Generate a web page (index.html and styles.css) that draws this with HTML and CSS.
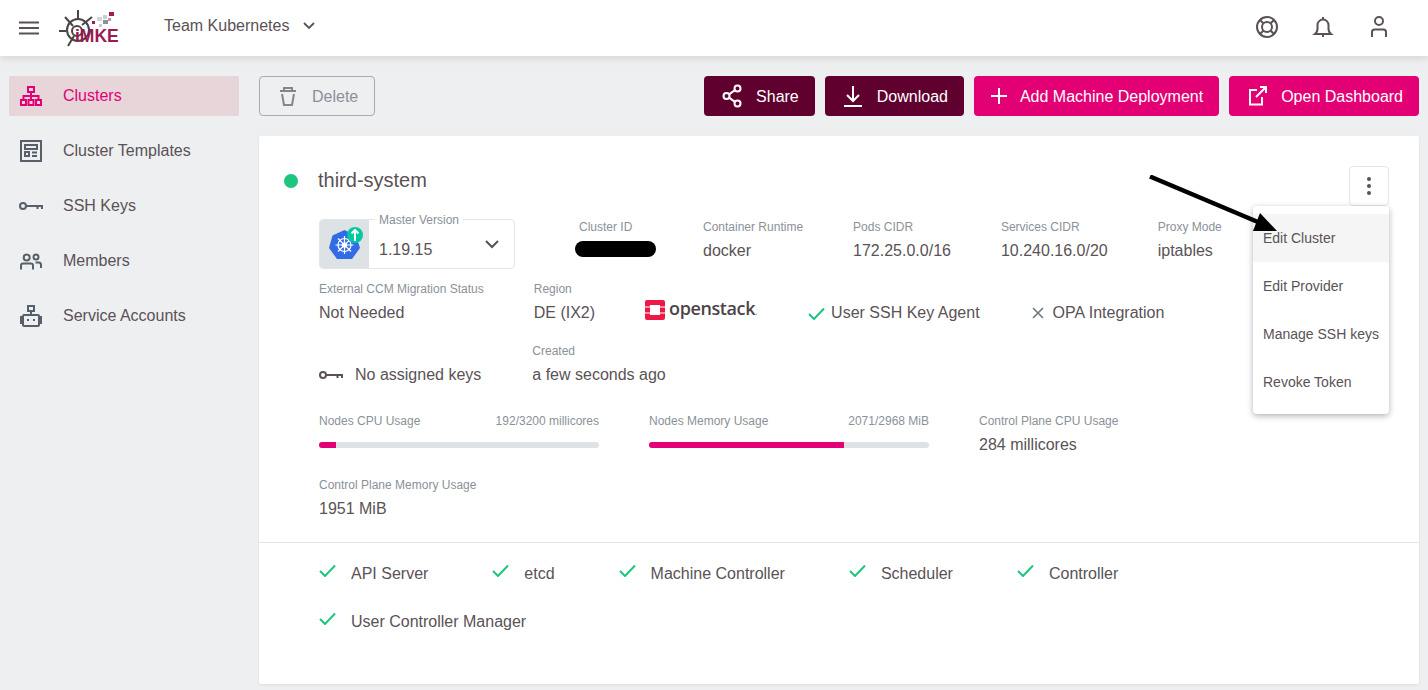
FILE: index.html
```html
<!DOCTYPE html>
<html lang="en">
<head>
    <meta charset="UTF-8">
    <meta name="viewport" content="width=device-width, initial-scale=1.0">
    <title>Kubermatic - third-system</title>
    <link rel="stylesheet" href="styles.css">
</head>
<body>
    <header class="topbar">
        <svg class="menu-icon" width="20" height="14" viewBox="0 0 20 14"><path d="M0 1.500h20M0 7h20M0 12.500h20" /></svg>
        <svg class="logo" width="62" height="40" viewBox="58 8 62 40">
            <g class="wheel">
                <circle cx="78" cy="30" r="11" />
                <circle cx="77" cy="31" r="5" />
                <path d="M78 10v9M59 31h7M65 17l8 9M92 17l-10 8M74 36l-6 10" />
            </g>
            <g class="logo-dots">
                <rect x="109" y="12" width="5" height="4" fill="#a01c50" />
                <rect x="103" y="15" width="4" height="4" fill="#c9cdd0" />
                <rect x="97" y="17" width="5" height="4" fill="#d3d5d8" />
                <rect x="103" y="20" width="5" height="4" fill="#8a9199" />
                <rect x="108" y="18" width="3" height="3" fill="#d68aa8" />
                <rect x="92" y="21" width="3" height="3" fill="#a01c50" />
                <rect x="99" y="24" width="3" height="3" fill="#c9cdd0" />
            </g>
            <text class="logo-text" x="75" y="42">iMKE</text>
        </svg>
        <div class="team-select">
            <span>Team Kubernetes</span>
            <svg width="12" height="8" viewBox="0 0 12 8"><path d="M1 1l5 5 5-5" /></svg>
        </div>
        <div class="top-icons">
            <svg width="24" height="24" viewBox="0 0 24 24"><circle cx="12" cy="12" r="10" /><circle cx="12" cy="12" r="5" /><path d="M5 5l3.500 3.500M19 5l-3.500 3.500M5 19l3.500-3.500M19 19l-3.500-3.500" /></svg>
            <svg width="24" height="24" viewBox="0 0 24 24"><path d="M4 19c2-1.500 2.500-3 2.500-5.500V10a5.500 5.500 0 0 1 11 0v3.500c0 2.500.5 4 2.500 5.500zM12 2v2M11 21h2" /></svg>
            <svg width="24" height="24" viewBox="0 0 24 24"><circle cx="12" cy="6" r="4" /><path d="M5 22v-5c0-1.500 1-2.500 2.500-2.500h9c1.500 0 2.500 1 2.500 2.500v5" /></svg>
        </div>
    </header>

    <div class="layout">
        <nav class="sidebar">
            <a class="nav-item active">
                <svg width="24" height="20" viewBox="0 0 22 20"><rect x="8" y="1" width="6" height="5" /><rect x="1" y="14" width="5" height="5" /><rect x="8.500" y="14" width="5" height="5" /><rect x="16" y="14" width="5" height="5" /><path d="M11 6v8M3.500 14v-4h15v4" /></svg>
                <span>Clusters</span>
            </a>
            <a class="nav-item">
                <svg width="24" height="22" viewBox="0 0 22 22"><rect x="1" y="1" width="20" height="20" /><rect x="5" y="5" width="12" height="4" /><rect x="5" y="12" width="4" height="4" /><path d="M12 12.500h5M12 16h5" /></svg>
                <span>Cluster Templates</span>
            </a>
            <a class="nav-item">
                <svg width="24" height="22" viewBox="0 0 24 22"><circle cx="4" cy="11" r="3" /><path d="M7 11h16v3M18.500 11v3" /></svg>
                <span>SSH Keys</span>
            </a>
            <a class="nav-item">
                <svg width="24" height="22" viewBox="0 0 22 22"><circle cx="6.700" cy="7.500" r="3" /><circle cx="16" cy="7" r="2.500" /><path d="M1 19.500v-4c0-1 1-2 2-2h8c1 0 2 1 2 2v4M15.500 12.500H19c1.500 0 2 1 2 2.500v3" /></svg>
                <span>Members</span>
            </a>
            <a class="nav-item">
                <svg width="24" height="22" viewBox="0 0 22 22"><rect x="8" y="1" width="6" height="5" /><path d="M11 6v4" /><rect x="3" y="10" width="16" height="11" rx="1" /><path d="M3 12H1v6h2M19 12h2v6h-2M7 15h2M13 15h2" /></svg>
                <span>Service Accounts</span>
            </a>
        </nav>

        <main class="content">
            <div class="actions">
                <button class="btn btn-disabled">
                    <svg width="24" height="24" viewBox="0 0 24 24"><path d="M4 7h16M8 7V4h8v3M6 10l2 11h8l2-11" /></svg>
                    Delete
                </button>
                <div class="actions-right">
                    <button class="btn btn-dark">
                        <svg width="24" height="24" viewBox="0 0 24 24"><circle cx="6.500" cy="12" r="3" /><circle cx="17.500" cy="4.500" r="3" /><circle cx="17.500" cy="19.500" r="3" /><path d="M9 10.300l6-4.100M9 13.700l6 4.100" /></svg>
                        Share
                    </button>
                    <button class="btn btn-dark">
                        <svg width="24" height="24" viewBox="0 0 24 24"><path d="M12 2v15M6 11l6 6 6-6M3 22h18" /></svg>
                        Download
                    </button>
                    <button class="btn btn-primary">
                        <svg width="18" height="18" viewBox="0 0 18 18"><path d="M9 1v16M1 9h16" /></svg>
                        Add Machine Deployment
                    </button>
                    <button class="btn btn-primary">
                        <svg width="24" height="24" viewBox="0 0 24 24"><path d="M12 6H5v14.500h12V13M11 13l9.500-9.500M15 3h6v6" /></svg>
                        Open Dashboard
                    </button>
                </div>
            </div>

            <section class="card">
                <div class="card-body">
                    <div class="title-row">
                        <span class="status-dot"></span>
                        <h1>third-system</h1>
                        <button class="kebab"><i></i><i></i><i></i></button>
                    </div>

                    <div class="details">
                        <div class="row row-version">
                            <div class="version">
                                <div class="version-icon">
                                    <svg width="37" height="36" viewBox="0 0 37 36">
                                        <path class="k8s-hex" d="M18.500 4L30 9.500 34 22l-8 11H11L3 22 6.500 9.500z" />
                                        <g class="k8s-wheel">
                                            <circle cx="18.500" cy="19" r="6.500" />
                                            <circle cx="18.500" cy="19" r="2" />
                                            <path d="M18.500 10v18M9.500 19h18M12 12.500l13 13M25 12.500l-13 13" />
                                        </g>
                                        <circle cx="29" cy="9" r="8" fill="#00c9a0" />
                                        <path class="k8s-arrow" d="M29 15V4M25.500 7.500L29 4l3.500 3.500" />
                                    </svg>
                                </div>
                                <span class="version-label">Master Version</span>
                                <span class="version-value">1.19.15</span>
                                <svg class="version-arrow" width="14" height="9" viewBox="0 0 14 9"><path d="M1 1l6 6 6-6" /></svg>
                            </div>
                            <div class="prop prop-id">
                                <label>Cluster ID</label>
                                <span class="redacted"></span>
                            </div>
                            <div class="prop"><label>Container Runtime</label><span>docker</span></div>
                            <div class="prop"><label>Pods CIDR</label><span>172.25.0.0/16</span></div>
                            <div class="prop"><label>Services CIDR</label><span>10.240.16.0/20</span></div>
                            <div class="prop"><label>Proxy Mode</label><span>iptables</span></div>
                        </div>

                        <div class="row row-provider">
                            <div class="prop"><label>External CCM Migration Status</label><span>Not Needed</span></div>
                            <div class="prop"><label>Region</label><span>DE (IX2)</span></div>
                            <div class="openstack">
                                <svg width="20" height="20" viewBox="0 0 20 20">
                                    <path fill="#ed1944" d="M2 0h16a2 2 0 0 1 2 2v4.500h-5V5H5v1.500H0V2a2 2 0 0 1 2-2zM0 7.500h5v5H0zM15 7.500h5v5h-5zM0 13.500h5V15h10v-1.500h5V18a2 2 0 0 1-2 2H2a2 2 0 0 1-2-2z" />
                                </svg>
                                <span>openstack<small>.</small></span>
                            </div>
                            <div class="flag">
                                <svg class="check" width="17" height="13" viewBox="0 0 17 13"><path d="M1 7l5 5L16 1.500" /></svg>
                                User SSH Key Agent
                            </div>
                            <div class="flag">
                                <svg class="cross" width="12" height="12" viewBox="0 0 12 12"><path d="M1 1l10 10M11 1L1 11" /></svg>
                                OPA Integration
                            </div>
                        </div>

                        <div class="row row-keys">
                            <div class="flag flag-keys">
                                <svg class="key" width="24" height="10" viewBox="0 0 24 10"><circle cx="4" cy="5" r="3" /><path d="M7 5h16v3M18.500 5v3" /></svg>
                                No assigned keys
                            </div>
                            <div class="prop"><label>Created</label><span>a few seconds ago</span></div>
                        </div>

                        <div class="row row-usage">
                            <div class="usage">
                                <div class="usage-head"><label>Nodes CPU Usage</label><label>192/3200 millicores</label></div>
                                <div class="bar"><div class="bar-fill" style="width: 6%"></div></div>
                            </div>
                            <div class="usage">
                                <div class="usage-head"><label>Nodes Memory Usage</label><label>2071/2968 MiB</label></div>
                                <div class="bar"><div class="bar-fill" style="width: 69.800%"></div></div>
                            </div>
                            <div class="prop"><label>Control Plane CPU Usage</label><span>284 millicores</span></div>
                        </div>

                        <div class="row row-memory">
                            <div class="prop"><label>Control Plane Memory Usage</label><span>1951 MiB</span></div>
                        </div>
                    </div>
                </div>

                <div class="card-footer">
                    <div class="health"><svg class="check" width="17" height="13" viewBox="0 0 17 13"><path d="M1 7l5 5L16 1.500" /></svg>API Server</div>
                    <div class="health"><svg class="check" width="17" height="13" viewBox="0 0 17 13"><path d="M1 7l5 5L16 1.500" /></svg>etcd</div>
                    <div class="health"><svg class="check" width="17" height="13" viewBox="0 0 17 13"><path d="M1 7l5 5L16 1.500" /></svg>Machine Controller</div>
                    <div class="health"><svg class="check" width="17" height="13" viewBox="0 0 17 13"><path d="M1 7l5 5L16 1.500" /></svg>Scheduler</div>
                    <div class="health"><svg class="check" width="17" height="13" viewBox="0 0 17 13"><path d="M1 7l5 5L16 1.500" /></svg>Controller</div>
                    <div class="health"><svg class="check" width="17" height="13" viewBox="0 0 17 13"><path d="M1 7l5 5L16 1.500" /></svg>User Controller Manager</div>
                </div>

                <div class="dropdown">
                    <a class="dropdown-item hovered">Edit Cluster</a>
                    <a class="dropdown-item">Edit Provider</a>
                    <a class="dropdown-item">Manage SSH keys</a>
                    <a class="dropdown-item">Revoke Token</a>
                </div>

                <svg class="annotation" width="130" height="60" viewBox="0 0 130 60">
                    <path d="M1 1.500L116 50" stroke="#000" stroke-width="4.500" fill="none" />
                    <path d="M128 56H104l7-18z" fill="#000" />
                </svg>
            </section>
        </main>
    </div>
</body>
</html>
```

FILE: styles.css
```css
* {
    margin: 0;
    padding: 0;
    box-sizing: border-box;
}

body {
    font-family: 'Liberation Sans', Arial, sans-serif;
    background-color: #eeeff1;
    color: #5a5256;
    font-size: 16px;
    height: 690px;
    overflow: hidden;
}

svg {
    display: block;
    flex-shrink: 0;
}

/* top bar */
.topbar {
    display: flex;
    align-items: center;
    height: 56px;
    background-color: #ffffff;
    box-shadow: 0 2px 8px rgba(0, 0, 0, 0.12);
    padding-left: 19px;
    padding-right: 37px;
    position: relative;
}

.menu-icon path {
    stroke: #5a5256;
    stroke-width: 2;
    fill: none;
}

.logo {
    margin-left: 19px;
}

.wheel circle,
.wheel path {
    stroke: #4a4548;
    stroke-width: 2;
    fill: none;
}

.logo-text {
    font-family: 'Liberation Sans', sans-serif;
    font-weight: 700;
    font-size: 17.500px;
    fill: #9b1b4f;
}

.team-select {
    display: flex;
    align-items: center;
    gap: 14px;
    margin-left: 44px;
    margin-bottom: 4px;
}

.team-select svg path {
    stroke: #5a5256;
    stroke-width: 1.800;
    fill: none;
}

.top-icons {
    display: flex;
    gap: 32px;
    margin-left: auto;
    margin-bottom: 2px;
}

.top-icons path,
.top-icons circle {
    stroke: #5a5256;
    stroke-width: 2;
    fill: none;
}

/* layout */
.layout {
    display: flex;
}

.sidebar {
    width: 259px;
    flex-shrink: 0;
    padding: 20px 20px 0 9px;
    display: flex;
    flex-direction: column;
    gap: 15px;
}

.nav-item {
    display: flex;
    align-items: center;
    height: 40px;
    padding-left: 10px;
    border-radius: 2px;
    gap: 20px;
}

.nav-item rect,
.nav-item path,
.nav-item circle {
    stroke: #57606a;
    stroke-width: 2;
    fill: none;
}

.nav-item.active {
    background-color: #e8d5da;
    color: #e20074;
}

.nav-item.active rect,
.nav-item.active path {
    stroke: #e20074;
}

.content {
    flex: 1;
    padding: 20px 9px 0 0;
}

/* action buttons */
.actions {
    display: flex;
    justify-content: space-between;
    margin-bottom: 20px;
}

.actions-right {
    display: flex;
    gap: 10px;
}

.btn {
    display: flex;
    align-items: center;
    gap: 12px;
    height: 40px;
    padding: 2px 16px 0;
    border: none;
    border-radius: 4px;
    font-family: inherit;
    font-size: 16px;
    color: #ffffff;
    cursor: pointer;
}

.btn svg {
    margin-top: -2px;
}

.btn path,
.btn circle {
    stroke: #ffffff;
    stroke-width: 2;
    fill: none;
}

.btn-dark {
    background-color: #60002e;
}

.btn-primary {
    background-color: #e20074;
}

.btn-disabled {
    background: transparent;
    border: 1px solid #a3aab0;
    color: #8a9199;
}

.btn-disabled path {
    stroke: #7f878f;
}

/* card */
.card {
    position: relative;
    height: 548px;
    background-color: #ffffff;
    border-radius: 2px;
    box-shadow: 0 1px 3px rgba(0, 0, 0, 0.08);
}

.card-body {
    padding: 30px 30px 0 25px;
}

.title-row {
    display: flex;
    height: 40px;
}

.status-dot {
    width: 14px;
    height: 14px;
    margin-top: 8px;
    border-radius: 50%;
    background-color: #1ec57e;
}

h1 {
    font-size: 20px;
    font-weight: 400;
    line-height: 28px;
    margin-left: 20px;
}

.kebab {
    margin-left: auto;
    width: 40px;
    height: 40px;
    background: #ffffff;
    border: 1px solid #e4e6e8;
    border-radius: 4px;
    display: flex;
    flex-direction: column;
    align-items: center;
    justify-content: center;
    gap: 3px;
}

.kebab i {
    width: 4px;
    height: 4px;
    border-radius: 50%;
    background-color: #5a5256;
}

.details {
    margin-left: 35px;
}

.row {
    display: flex;
    gap: 50px;
}

.row-version {
    margin-top: 13px;
}

.row-provider {
    margin-top: 12px;
}

.row-keys {
    margin-top: 19px;
}

.row-usage {
    margin-top: 27px;
}

.row-memory {
    margin-top: 21px;
}

.prop {
    display: flex;
    flex-direction: column;
    gap: 5px;
}

label {
    font-size: 12px;
    line-height: 16px;
    color: #8a9199;
}

.prop span {
    line-height: 22px;
    white-space: nowrap;
}

.prop-id {
    margin-left: 14px;
    width: 74px;
}

.prop .redacted {
    display: block;
    width: 81px;
    height: 16px;
    margin: 1px 0 0 -4px;
    background-color: #000000;
    border-radius: 8px;
}

/* version box */
.version {
    position: relative;
    display: flex;
    align-items: center;
    width: 196px;
    height: 50px;
    border: 1px solid #e4e6e8;
    border-radius: 4px;
}

.version-icon {
    width: 49px;
    height: 48px;
    background-color: #dfe2e5;
    display: flex;
    align-items: center;
    justify-content: center;
    border-radius: 3px 0 0 3px;
}

.k8s-hex {
    fill: #326ce5;
}

.k8s-wheel circle,
.k8s-wheel path {
    stroke: #ffffff;
    stroke-width: 1.200;
    fill: none;
}

.k8s-arrow {
    stroke: #ffffff;
    stroke-width: 2;
    fill: none;
}

.version-label {
    position: absolute;
    left: 55px;
    top: -8px;
    padding: 0 4px;
    background-color: #ffffff;
    font-size: 12px;
    line-height: 16px;
    color: #8a9199;
}

.version-value {
    margin-left: 10px;
    margin-top: 12px;
}

.version-arrow {
    margin-left: auto;
    margin-right: 15px;
}

.version-arrow path {
    stroke: #5a5256;
    stroke-width: 2;
    fill: none;
}

/* provider row */
.openstack {
    display: flex;
    gap: 4px;
    height: 22px;
    width: 113px;
    align-self: flex-end;
    font-family: 'Open Sans', sans-serif;
    font-weight: 600;
    font-size: 18px;
    line-height: 18px;
    letter-spacing: -0.4px;
    color: #4d4448;
}

.openstack svg {
    margin-top: -2px;
}

.openstack span {
    margin-top: -3px;
}

.openstack small {
    font-size: 9px;
    color: #8a9199;
}

.flag {
    display: flex;
    align-items: center;
    gap: 6px;
    height: 22px;
    align-self: flex-end;
}

.check path {
    stroke: #1ec57e;
    stroke-width: 2;
    fill: none;
}

.cross {
    margin: 0 3px 0 2px;
}

.cross path {
    stroke: #6f777f;
    stroke-width: 1.600;
    fill: none;
}

.flag-keys {
    gap: 12px;
    padding-right: 1px;
}

.key circle,
.key path {
    stroke: #5a5256;
    stroke-width: 2;
    fill: none;
}

/* usage bars */
.usage {
    width: 280px;
}

.usage-head {
    display: flex;
    justify-content: space-between;
}

.bar {
    height: 6px;
    margin-top: 13px;
    background-color: #dfe2e5;
    border-radius: 3px;
    overflow: hidden;
}

.bar-fill {
    height: 100%;
    background-color: #e20074;
}

/* health footer */
.card-footer {
    position: absolute;
    left: 0;
    right: 0;
    top: 406px;
    border-top: 1px solid #e4e6e8;
    padding: 20px 60px 0;
    display: flex;
    flex-wrap: wrap;
    gap: 26px 64px;
}

.health {
    display: flex;
    align-items: center;
    gap: 15px;
    line-height: 22px;
}

.health svg {
    margin-top: -8px;
}

/* overlay menu */
.dropdown {
    position: absolute;
    top: 70px;
    right: 30px;
    width: 136px;
    padding: 8px 0;
    background-color: #ffffff;
    border-radius: 4px;
    box-shadow: 0 2px 6px rgba(0, 0, 0, 0.3);
}

.dropdown-item {
    display: flex;
    align-items: center;
    height: 48px;
    padding-left: 10px;
    font-size: 14px;
    white-space: nowrap;
}

.dropdown-item.hovered {
    background-color: #f5f5f5;
}

.annotation {
    position: absolute;
    left: 890px;
    top: 39px;
}
```
